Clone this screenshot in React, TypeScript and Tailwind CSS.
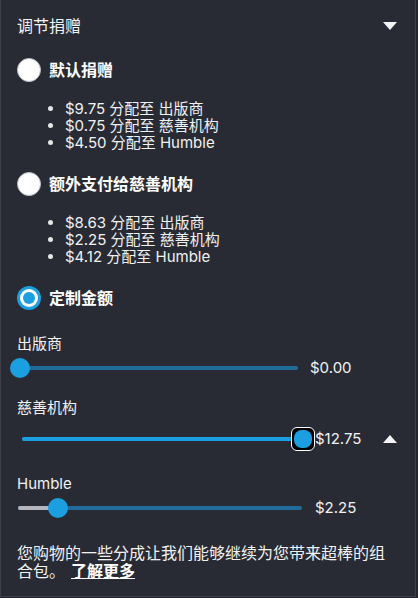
import React from 'react';

const font = { fontFamily: 'Inter, "Noto Sans CJK SC", sans-serif' };

const Radio = ({ checked }: { checked?: boolean }) =>
  checked ? (
    <div className="w-6 h-6 rounded-full bg-[#1b9fe0] flex items-center justify-center">
      <div className="w-[18px] h-[18px] rounded-full bg-white flex items-center justify-center">
        <div className="w-3 h-3 rounded-full bg-[#1b9fe0]" />
      </div>
    </div>
  ) : (
    <div className="w-6 h-6 rounded-full bg-white border border-[#b9bcc2]" />
  );

const Option = ({ label, checked, items }: { label: string; checked?: boolean; items?: string[] }) => (
  <div>
    <div className="flex items-center gap-2">
      <Radio checked={checked} />
      <span className="text-[16px] font-bold text-white">{label}</span>
    </div>
    {items && (
      <ul className="list-disc pl-[48px] mt-[18px] text-[15px] leading-[17px] text-[#f2f2f2] marker:text-[#e6e6e6]">
        {items.map((t) => (
          <li key={t}>{t}</li>
        ))}
      </ul>
    )}
  </div>
);

const Slider = ({
  label,
  value,
  pct,
  fill,
  track,
  offset,
  width,
  gap,
  focused,
  extra,
}: {
  label: string;
  value: string;
  pct: number;
  fill: string;
  track: string;
  offset: number;
  width: number;
  gap: number;
  focused?: boolean;
  extra?: React.ReactNode;
}) => (
  <div>
    <div className="text-[15px] text-[#f2f2f2] leading-[20px]">{label}</div>
    <div className={focused ? 'flex items-center mt-[4px] h-[34px]' : 'flex items-center mt-[2px] h-[24px]'}>
      <div
        className="relative h-[4px] rounded-full"
        style={{ background: track, width: `${width}px`, marginLeft: `${offset}px` }}
      >
        <div className="absolute left-0 top-0 h-full rounded-full" style={{ width: `${pct}%`, background: fill }} />
        {focused ? (
          <div
            className="absolute top-1/2 -translate-y-1/2 -translate-x-1/2 w-[24px] h-[24px] rounded-[6px] border border-white bg-black p-[2px]"
            style={{ left: `${pct}%` }}
          >
            <div className="w-full h-full rounded-[8px] bg-[#1b9fe0]" />
          </div>
        ) : (
          <div
            className="absolute top-1/2 -translate-y-1/2 -translate-x-1/2 w-[20px] h-[20px] rounded-full bg-[#1b9fe0]"
            style={{ left: `${pct}%` }}
          />
        )}
      </div>
      <span className="text-[15px] text-[#f2f2f2]" style={{ marginLeft: `${gap}px` }}>
        {value}
      </span>
      {extra}
    </div>
  </div>
);

const App = () => {
  return (
    <div className="min-h-screen bg-[#23262e]" style={font}>
      <div className="w-[416px] h-[597px] bg-[#282b34] border-x border-b border-[#3b3f49] px-[16px] pt-[15px]">
        <div className="flex items-center justify-between">
          <span className="text-[16px] text-[#f2f2f2] leading-[22px]">调节捐赠</span>
          <svg width="14" height="9" viewBox="0 0 14 9" className="mr-[2px]">
            <path d="M0 0 H14 L7 8 Z" fill="#f5f5f5" />
          </svg>
        </div>

        <div className="mt-[21px] flex flex-col gap-[21px]">
          <Option
            label="默认捐赠"
            items={['$9.75 分配至 出版商', '$0.75 分配至 慈善机构', '$4.50 分配至 Humble']}
          />
          <Option
            label="额外支付给慈善机构"
            items={['$8.63 分配至 出版商', '$2.25 分配至 慈善机构', '$4.12 分配至 Humble']}
          />
          <Option label="定制金额" checked />
        </div>

        <div className="mt-[24px] flex flex-col gap-[18px]">
          <Slider label="出版商" value="$0.00" pct={0} fill="#1b9fe0" track="#1f6b99" offset={3} width={278} gap={12} />
          <Slider
            label="慈善机构"
            value="$12.75"
            pct={100}
            fill="#1b9fe0"
            track="#1f6b99"
            offset={5}
            width={281}
            gap={12}
            focused
            extra={
              <svg width="14" height="9" viewBox="0 0 14 9" className="ml-auto mr-[2px]">
                <path d="M0 8 H14 L7 0 Z" fill="#f5f5f5" />
              </svg>
            }
          />
          <Slider label="Humble" value="$2.25" pct={14} fill="#b3b6bd" track="#1f6b99" offset={1} width={284} gap={13} />
        </div>

        <p className="mt-[24px] text-[16px] leading-[18px] text-[#f2f2f2] w-[372px]">
          您购物的一些分成让我们能够继续为您带来超棒的组合包。
          <a className="font-bold underline ml-[6px] text-white">了解更多</a>
        </p>
      </div>
    </div>
  );
};

export default App;
